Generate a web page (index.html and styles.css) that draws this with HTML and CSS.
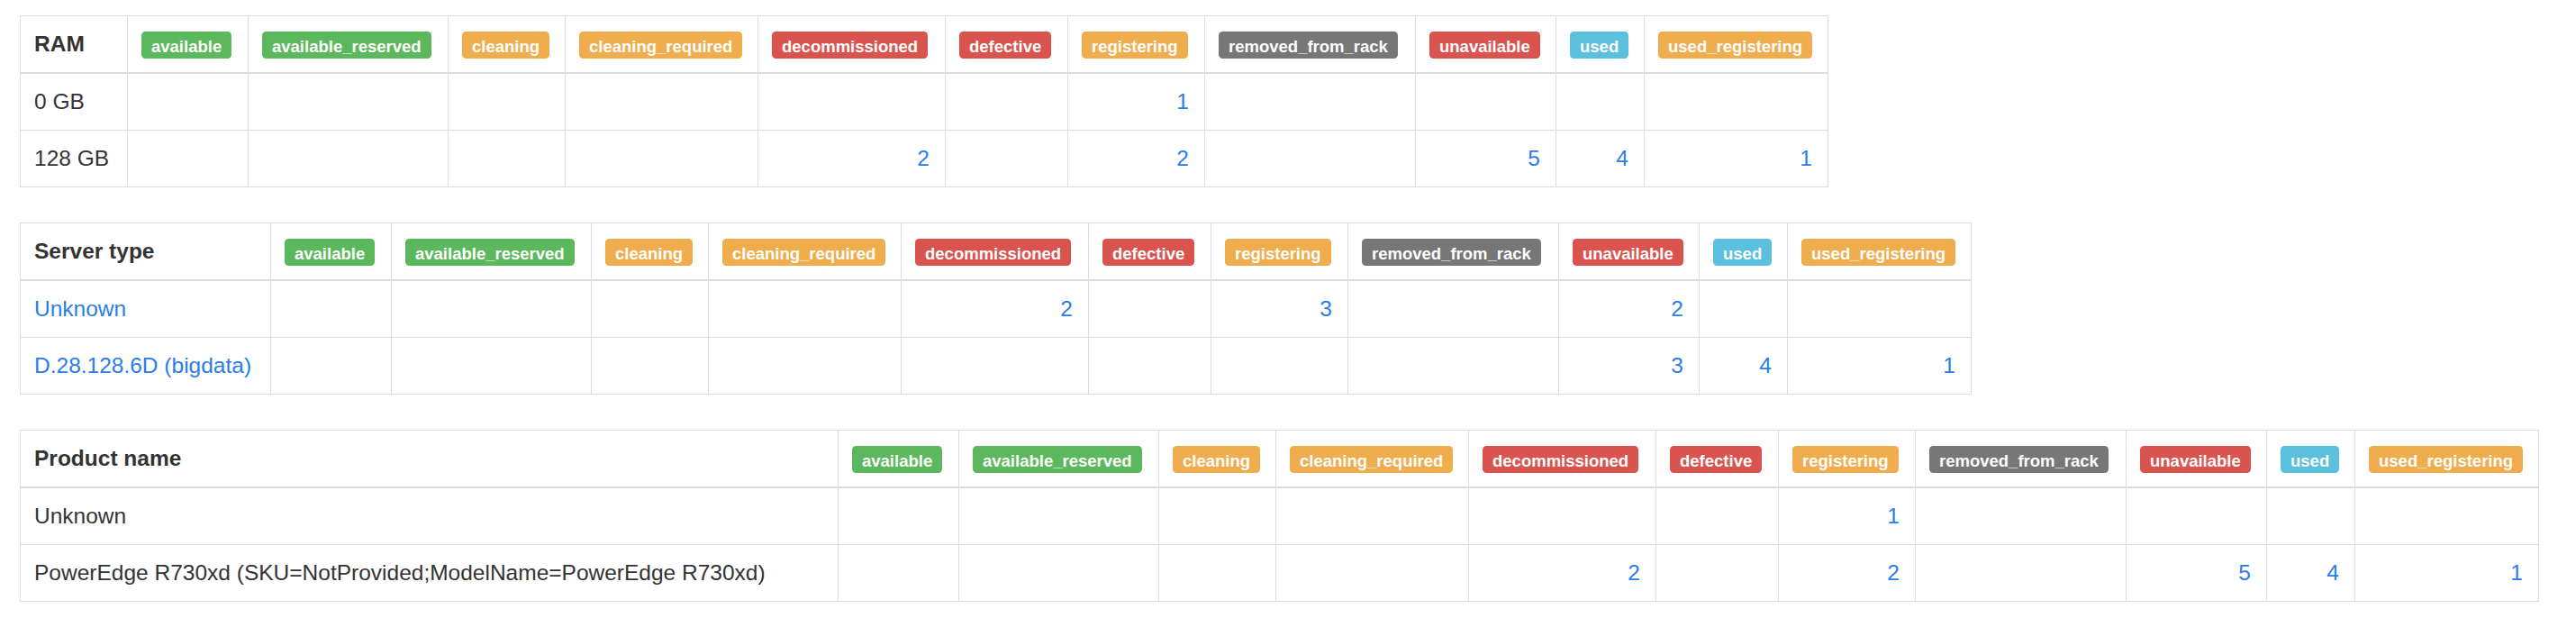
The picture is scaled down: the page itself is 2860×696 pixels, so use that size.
FILE: index.html
```html
<!DOCTYPE html>
<html lang="en">
<head>
<meta charset="utf-8">
<title>Server statistics</title>
<link rel="stylesheet" href="styles.css">
</head>
<body>
<div class="page">

<table class="stats t-ram">
  <colgroup>
    <col class="c-key"><col class="c-available"><col class="c-available-reserved"><col class="c-cleaning"><col class="c-cleaning-required"><col class="c-decommissioned"><col class="c-defective"><col class="c-registering"><col class="c-removed"><col class="c-unavailable"><col class="c-used"><col class="c-used-registering">
  </colgroup>
  <thead>
    <tr>
      <th class="key">RAM</th>
      <th><span class="label label-success">available</span></th>
      <th><span class="label label-success">available_reserved</span></th>
      <th><span class="label label-warning">cleaning</span></th>
      <th><span class="label label-warning">cleaning_required</span></th>
      <th><span class="label label-danger">decommissioned</span></th>
      <th><span class="label label-danger">defective</span></th>
      <th><span class="label label-warning">registering</span></th>
      <th><span class="label label-default">removed_from_rack</span></th>
      <th><span class="label label-danger">unavailable</span></th>
      <th><span class="label label-info">used</span></th>
      <th><span class="label label-warning">used_registering</span></th>
    </tr>
  </thead>
  <tbody>
    <tr>
      <td class="key">0 GB</td>
      <td></td><td></td><td></td><td></td><td></td><td></td>
      <td class="num"><a href="#">1</a></td>
      <td></td><td></td><td></td><td></td>
    </tr>
    <tr>
      <td class="key">128 GB</td>
      <td></td><td></td><td></td><td></td>
      <td class="num"><a href="#">2</a></td>
      <td></td>
      <td class="num"><a href="#">2</a></td>
      <td></td>
      <td class="num"><a href="#">5</a></td>
      <td class="num"><a href="#">4</a></td>
      <td class="num"><a href="#">1</a></td>
    </tr>
  </tbody>
</table>

<table class="stats t-server">
  <colgroup>
    <col class="c-key"><col class="c-available"><col class="c-available-reserved"><col class="c-cleaning"><col class="c-cleaning-required"><col class="c-decommissioned"><col class="c-defective"><col class="c-registering"><col class="c-removed"><col class="c-unavailable"><col class="c-used"><col class="c-used-registering">
  </colgroup>
  <thead>
    <tr>
      <th class="key">Server type</th>
      <th><span class="label label-success">available</span></th>
      <th><span class="label label-success">available_reserved</span></th>
      <th><span class="label label-warning">cleaning</span></th>
      <th><span class="label label-warning">cleaning_required</span></th>
      <th><span class="label label-danger">decommissioned</span></th>
      <th><span class="label label-danger">defective</span></th>
      <th><span class="label label-warning">registering</span></th>
      <th><span class="label label-default">removed_from_rack</span></th>
      <th><span class="label label-danger">unavailable</span></th>
      <th><span class="label label-info">used</span></th>
      <th><span class="label label-warning">used_registering</span></th>
    </tr>
  </thead>
  <tbody>
    <tr>
      <td class="key"><a href="#">Unknown</a></td>
      <td></td><td></td><td></td><td></td>
      <td class="num"><a href="#">2</a></td>
      <td></td>
      <td class="num"><a href="#">3</a></td>
      <td></td>
      <td class="num"><a href="#">2</a></td>
      <td></td><td></td>
    </tr>
    <tr>
      <td class="key"><a href="#">D.28.128.6D (bigdata)</a></td>
      <td></td><td></td><td></td><td></td><td></td><td></td><td></td><td></td>
      <td class="num"><a href="#">3</a></td>
      <td class="num"><a href="#">4</a></td>
      <td class="num"><a href="#">1</a></td>
    </tr>
  </tbody>
</table>

<table class="stats t-product">
  <colgroup>
    <col class="c-key"><col class="c-available"><col class="c-available-reserved"><col class="c-cleaning"><col class="c-cleaning-required"><col class="c-decommissioned"><col class="c-defective"><col class="c-registering"><col class="c-removed"><col class="c-unavailable"><col class="c-used"><col class="c-used-registering">
  </colgroup>
  <thead>
    <tr>
      <th class="key">Product name</th>
      <th><span class="label label-success">available</span></th>
      <th><span class="label label-success">available_reserved</span></th>
      <th><span class="label label-warning">cleaning</span></th>
      <th><span class="label label-warning">cleaning_required</span></th>
      <th><span class="label label-danger">decommissioned</span></th>
      <th><span class="label label-danger">defective</span></th>
      <th><span class="label label-warning">registering</span></th>
      <th><span class="label label-default">removed_from_rack</span></th>
      <th><span class="label label-danger">unavailable</span></th>
      <th><span class="label label-info">used</span></th>
      <th><span class="label label-warning">used_registering</span></th>
    </tr>
  </thead>
  <tbody>
    <tr>
      <td class="key">Unknown</td>
      <td></td><td></td><td></td><td></td><td></td><td></td>
      <td class="num"><a href="#">1</a></td>
      <td></td><td></td><td></td><td></td>
    </tr>
    <tr>
      <td class="key">PowerEdge R730xd (SKU=NotProvided;ModelName=PowerEdge R730xd)</td>
      <td></td><td></td><td></td><td></td>
      <td class="num"><a href="#">2</a></td>
      <td></td>
      <td class="num"><a href="#">2</a></td>
      <td></td>
      <td class="num"><a href="#">5</a></td>
      <td class="num"><a href="#">4</a></td>
      <td class="num"><a href="#">1</a></td>
    </tr>
  </tbody>
</table>

</div>
</body>
</html>
```

FILE: styles.css
```css
html, body {
  margin: 0;
  padding: 0;
  background: #fff;
}

body {
  font-family: "Liberation Sans", Arial, Helvetica, sans-serif;
  font-size: 24.5px;
  line-height: 34px;
  color: #333;
}

.page {
  padding: 17px 0 0 22px;
}

a {
  color: #2b7de9;
  text-decoration: none;
}

.stats {
  border-collapse: collapse;
  table-layout: fixed;
  margin: 0 0 39px 0;
  border: 1px solid #ddd;
}

.t-ram { width: 2007px; }
.t-server { width: 2166px; }
.t-product { width: 2796px; }

.t-ram .c-key { width: 119px; }
.t-server .c-key { width: 278px; }
.t-product .c-key { width: 908px; }

.c-available { width: 134px; }
.c-available-reserved { width: 222px; }
.c-cleaning { width: 130px; }
.c-cleaning-required { width: 214px; }
.c-decommissioned { width: 208px; }
.c-defective { width: 136px; }
.c-registering { width: 152px; }
.c-removed { width: 234px; }
.c-unavailable { width: 156px; }
.c-used { width: 98px; }
.c-used-registering { width: 204px; }

.stats th,
.stats td {
  border: 1px solid #ddd;
  padding: 14px 17px 14px 15px;
  line-height: 34px;
  height: 34px;
  text-align: left;
  white-space: nowrap;
}

.stats th {
  font-weight: bold;
  vertical-align: bottom;
  border-bottom-width: 2px;
}

.stats td {
  vertical-align: top;
}

.stats th.key,
.stats td.key {
  padding-left: 15px;
}

.stats td.num {
  text-align: right;
}

.label {
  display: inline;
  padding: 5.5px 11px 3.5px;
  font-size: 18.5px;
  font-weight: bold;
  line-height: 1;
  color: #fff;
  white-space: nowrap;
  border-radius: 4.5px;
}

.label-success { background-color: #5cb85c; }
.label-warning { background-color: #f0ad4e; }
.label-danger { background-color: #d9534f; }
.label-default { background-color: #777; }
.label-info { background-color: #5bc0de; }
```
